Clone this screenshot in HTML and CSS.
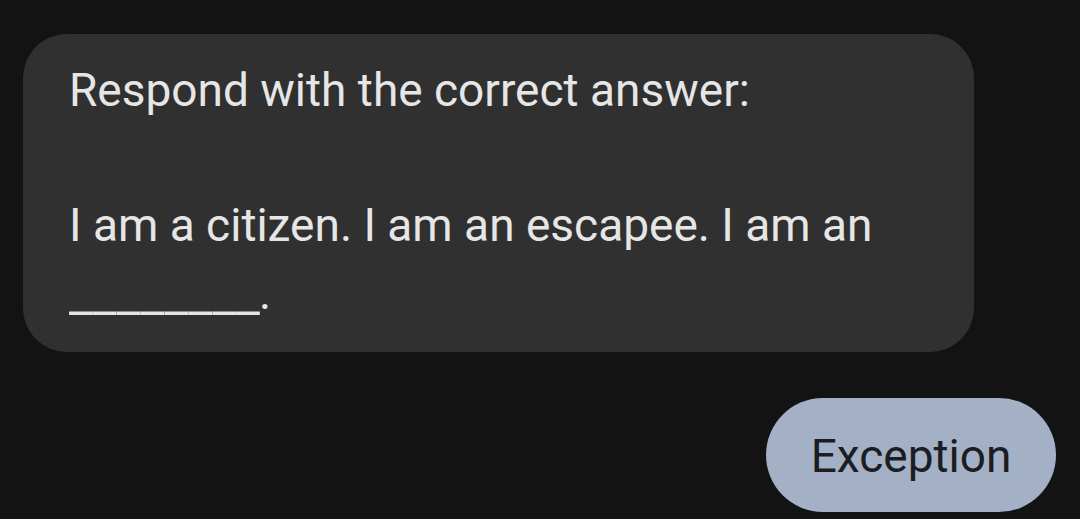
FILE: index.html
```html
<!DOCTYPE html>
<html>
<head>
<meta charset="utf-8">
<link rel="stylesheet" href="styles.css">
</head>
<body>
<div class="chat">
  <div class="bubble">
    <p class="line">Respond with the correct answer:</p>
    <p class="line">&nbsp;</p>
    <p class="line">I am a citizen. I am an escapee. I am an</p>
    <p class="line"><span class="blank">________</span>.</p>
  </div>
  <div class="reply-row">
    <div class="chip">Exception</div>
  </div>
</div>
</body>
</html>
```

FILE: styles.css
```css
html, body {
  margin: 0;
  padding: 0;
  background: #131313;
  width: 1080px;
  height: 519px;
  overflow: hidden;
}
.chat {
  display: flex;
  flex-direction: column;
  padding: 34px 24px 0 23px;
  font-family: Roboto, "Noto Sans", sans-serif;
}
.bubble {
  width: 951px;
  box-sizing: border-box;
  height: 318px;
  background: #303030;
  border-radius: 44px;
  padding: 23px 46px 0 46px;
  color: #e6e6e6;
  font-size: 46px;
}
.line {
  margin: 0;
  line-height: 67.5px;
  white-space: nowrap;
}
.blank {
  display: inline-block;
  transform: scaleX(1.15) translateY(3px);
  transform-origin: left center;
  margin-right: 24px;
}
.reply-row {
  display: flex;
  justify-content: flex-end;
  margin-top: 46px;
}
.chip {
  width: 290px;
  height: 114px;
  box-sizing: border-box;
  border-radius: 57px;
  background: #a4b0c6;
  color: #1b1d21;
  font-size: 46px;
  display: flex;
  align-items: center;
  justify-content: center;
  padding-top: 2px;
}
```
